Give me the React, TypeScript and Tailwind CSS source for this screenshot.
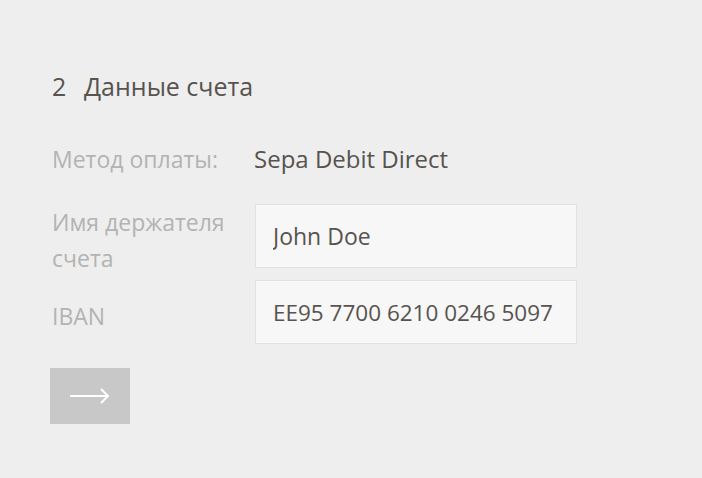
import React from "react";

const App = () => {
  return (
    <div
      className="w-[702px] h-[478px] bg-[#eeeeee] pl-[52px] pt-[70px]"
      style={{ fontFamily: "'Open Sans', 'Noto Sans', sans-serif" }}
    >
      <h2 className="flex text-[25px] leading-[32px] text-[#57534e]">
        <span className="w-[32px]">2</span>
        <span>Данные счета</span>
      </h2>

      <div className="mt-[41px] flex items-center h-[32px]">
        <div className="w-[202px] text-[23px] text-[#b3b3b3]">Метод оплаты:</div>
        <div className="text-[24px] text-[#57534e]">Sepa Debit Direct</div>
      </div>

      <div className="mt-[29px] flex">
        <div className="w-[203px] text-[23px] leading-[36px] text-[#b3b3b3]">
          Имя держателя
          <br />
          счета
        </div>
        <input
          defaultValue="John Doe"
          className="w-[322px] h-[64px] border border-[#e2e2e2] bg-[#f7f7f7] px-[17px] text-[23px] text-[#57534e] outline-none"
        />
      </div>

      <div className="mt-[4px] flex">
        <div className="w-[203px] pt-[18px] text-[23px] leading-[36px] text-[#b3b3b3]">IBAN</div>
        <input
          defaultValue="EE95 7700 6210 0246 5097"
          className="w-[322px] h-[64px] border border-[#e2e2e2] bg-[#f7f7f7] px-[17px] text-[22.5px] text-[#57534e] outline-none"
        />
      </div>

      <button className="mt-[24px] -ml-[2px] w-[80px] h-[56px] bg-[#c8c8c8] flex items-center justify-center">
        <svg width="40" height="16" viewBox="0 0 40 16" fill="none">
          <path d="M0 8H38M31 1L38 8L31 15" stroke="#ffffff" strokeWidth="2" />
        </svg>
      </button>
    </div>
  );
};

export default App;
